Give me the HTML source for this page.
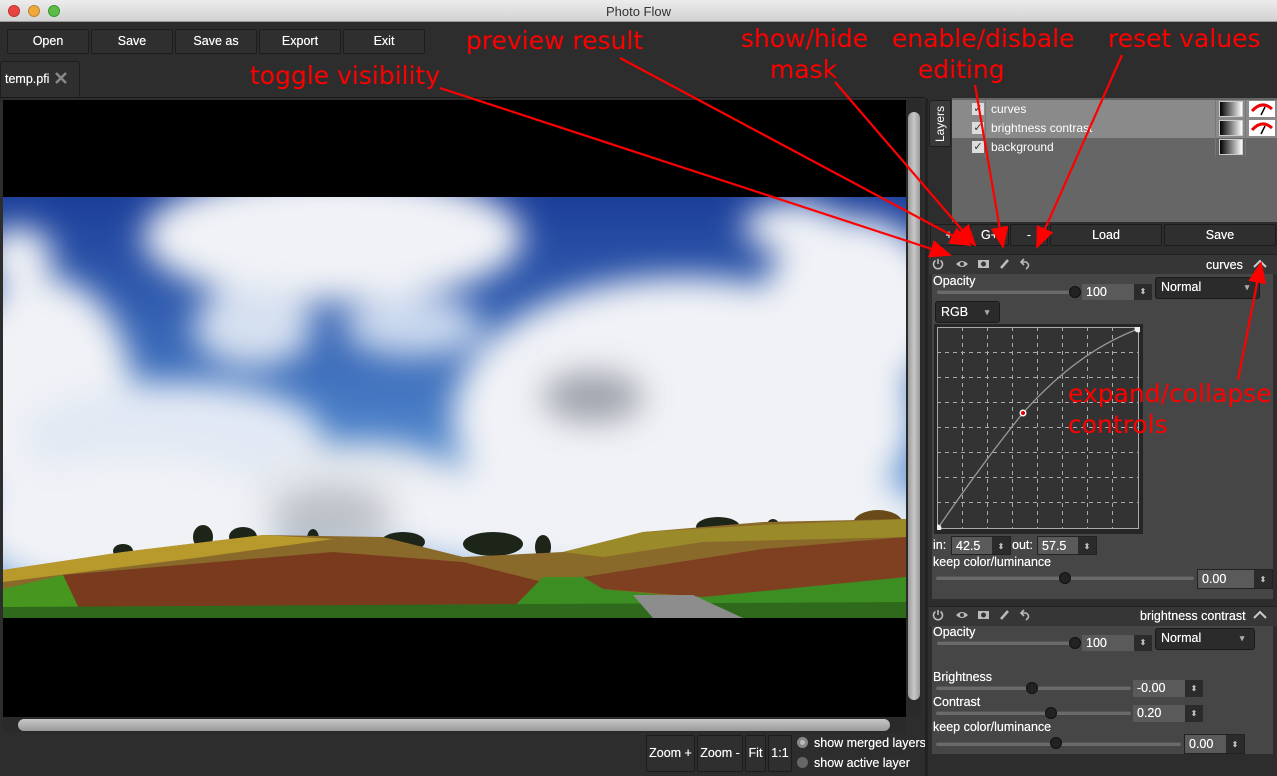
<!DOCTYPE html>
<html><head><meta charset="utf-8"><style>
*{margin:0;padding:0;box-sizing:border-box}
body{width:1277px;height:776px;overflow:hidden;background:#2d2d2d;font-family:"Liberation Sans",sans-serif;font-size:12px;color:#fff;position:relative}
.a{position:absolute}
.btn{position:absolute;background:#2f2f2f;border:1px solid #1c1c1c;border-radius:2px;color:#fff;font-size:12.5px;text-align:center;text-shadow:0 0 .4px #fff}
.bd{position:absolute;background:#2b2b2b;border:1px solid #1a1a1a;border-radius:3px;color:#fff;font-size:12.5px;text-shadow:0 0 .4px #fff}
.sp{position:absolute;background:#5a5a5a;color:#fff;font-size:12.5px;padding-left:4px;text-shadow:0 0 .4px #fff}
.sp i{position:absolute;right:0;top:0;bottom:0;width:18px;background:#2b2b2b;font-style:normal;color:#bbb;font-size:8px;text-align:center}
.tr{position:absolute;height:4px;background:#6a6a6a;border-radius:2px;border-top:1px solid #555}
.kn{position:absolute;width:12px;height:12px;border-radius:6px;background:#222;border:1px solid #111}
.lb{position:absolute;font-size:12.5px;color:#fff;text-shadow:0 0 .4px #fff;white-space:nowrap}
.red{position:absolute;color:#f00;font-family:"DejaVu Sans",sans-serif;font-size:25px;line-height:28px}
</style></head><body>
<div class="a" style="left:0;top:0;width:1277px;height:22px;background:linear-gradient(#ececec,#d2d2d2);border-bottom:1px solid #999"></div>
<div class="a" style="left:0;top:4px;width:1277px;text-align:center;color:#333;font-size:13px">Photo Flow</div>
<div class="a" style="left:8px;top:5px;width:12px;height:12px;border-radius:6px;background:#e9443f;border:1px solid #b33"></div>
<div class="a" style="left:28px;top:5px;width:12px;height:12px;border-radius:6px;background:#f0a83a;border:1px solid #b83"></div>
<div class="a" style="left:48px;top:5px;width:12px;height:12px;border-radius:6px;background:#5ebb45;border:1px solid #393"></div>
<div class="btn" style="left:7px;top:29px;width:82px;height:25px;line-height:23px">Open</div>
<div class="btn" style="left:91px;top:29px;width:82px;height:25px;line-height:23px">Save</div>
<div class="btn" style="left:175px;top:29px;width:82px;height:25px;line-height:23px">Save as</div>
<div class="btn" style="left:259px;top:29px;width:82px;height:25px;line-height:23px">Export</div>
<div class="btn" style="left:343px;top:29px;width:82px;height:25px;line-height:23px">Exit</div>
<div class="a" style="left:0;top:61px;width:80px;height:37px;background:#2f2f2f;border:1px solid #1e1e1e;border-bottom:none;border-radius:3px 3px 0 0"></div>
<div class="lb" style="left:5px;top:72px">temp.pfi</div>
<svg class="a" style="left:54px;top:71px" width="14" height="14" stroke="#888" stroke-width="2.5"><path d="M2 2L12 12M12 2L2 12"/></svg>
<div class="a" style="left:0;top:97px;width:925px;height:1px;background:#1a1a1a"></div>
<div class="a" style="left:3px;top:100px;width:903px;height:617px;background:#000"></div>
<svg class="a" style="left:3px;top:197px" width="903" height="421" viewBox="0 0 903 421">
<defs>
<filter id="b" filterUnits="userSpaceOnUse" x="-200" y="-200" width="1300" height="800"><feGaussianBlur stdDeviation="16"/></filter>
<linearGradient id="sky" x1="0" y1="0" x2="0" y2="1"><stop offset="0" stop-color="#1c3f9a"/><stop offset=".6" stop-color="#4f86cc"/><stop offset="1" stop-color="#8ab4e2"/></linearGradient>
</defs>
<rect width="903" height="421" fill="url(#sky)"/>
<g filter="url(#b)" fill="#f0f2f6">
<ellipse cx="330" cy="40" rx="190" ry="65"/>
<ellipse cx="40" cy="200" rx="90" ry="120"/>
<ellipse cx="15" cy="60" rx="35" ry="30"/>
<ellipse cx="170" cy="240" rx="150" ry="55" fill="#e2e9f4"/>
<ellipse cx="680" cy="220" rx="230" ry="140"/>
<ellipse cx="850" cy="110" rx="90" ry="90"/>
<ellipse cx="790" cy="30" rx="50" ry="25"/>
<ellipse cx="130" cy="330" rx="160" ry="70"/>
<ellipse cx="360" cy="300" rx="110" ry="55" fill="#e6e9ee"/>
<ellipse cx="640" cy="320" rx="290" ry="60"/>
<ellipse cx="410" cy="130" rx="70" ry="30" fill="#c9d8ee"/>
<ellipse cx="250" cy="130" rx="60" ry="40" fill="#d5e0f0"/>
</g>
<g filter="url(#b)">
<ellipse cx="590" cy="200" rx="50" ry="25" fill="#7a7f8a" opacity=".7"/>
<ellipse cx="330" cy="320" rx="60" ry="30" fill="#a0a5ae" opacity=".6"/>
</g>
<g fill="#1d2418">
<ellipse cx="200" cy="340" rx="10" ry="12"/><ellipse cx="240" cy="340" rx="14" ry="10"/><ellipse cx="310" cy="342" rx="6" ry="10"/>
<ellipse cx="400" cy="345" rx="22" ry="10"/><ellipse cx="490" cy="347" rx="30" ry="12"/><ellipse cx="540" cy="350" rx="8" ry="12"/>
<ellipse cx="715" cy="330" rx="22" ry="10"/><ellipse cx="770" cy="334" rx="8" ry="12"/><ellipse cx="875" cy="327" rx="25" ry="14" fill="#6b4a1a"/>
<ellipse cx="120" cy="354" rx="10" ry="7"/>
</g>
<path d="M0 373 L120 355 L260 338 L380 340 L460 360 L560 355 L640 335 L760 325 L903 322 L903 421 L0 421Z" fill="#8a6a2a"/>
<path d="M0 373 L120 355 L260 338 L330 342 L200 360 L0 385Z" fill="#b89a2c"/>
<path d="M560 355 L640 335 L760 328 L903 322 L903 340 L700 345 L600 360Z" fill="#9a8a2a"/>
<path d="M60 378 L330 355 L460 365 L540 385 L510 425 L80 420Z" fill="#7a3a1e"/>
<path d="M580 380 L760 352 L903 340 L903 380 L780 395 L700 400 L600 392Z" fill="#7e4020"/>
<path d="M540 380 L580 380 L600 392 L660 398 L700 400 L903 380 L903 421 L500 421Z" fill="#3c8e22"/>
<path d="M0 392 L60 378 L80 420 L0 421Z" fill="#47961f"/>
<path d="M0 410 L903 405 L903 421 L0 421Z" fill="#2f6a1c"/>
<path d="M630 398 L690 398 L740 421 L650 421Z" fill="#8c8c8c"/>
</svg>
<div class="a" style="left:906px;top:100px;width:16px;height:617px;background:#2a2a2a"></div>
<div class="a" style="left:908px;top:112px;width:12px;height:588px;background:linear-gradient(90deg,#9a9a9a,#c8c8c8,#9a9a9a);border-radius:6px"></div>
<div class="a" style="left:3px;top:717px;width:903px;height:16px;background:#2a2a2a"></div>
<div class="a" style="left:18px;top:719px;width:872px;height:12px;background:linear-gradient(#c8c8c8,#9a9a9a);border-radius:6px"></div>
<div class="btn" style="left:646px;top:735px;width:49px;height:37px;line-height:35px">Zoom +</div>
<div class="btn" style="left:697px;top:735px;width:46px;height:37px;line-height:35px">Zoom -</div>
<div class="btn" style="left:745px;top:735px;width:21px;height:37px;line-height:35px">Fit</div>
<div class="btn" style="left:768px;top:735px;width:24px;height:37px;line-height:35px">1:1</div>
<div class="a" style="left:797px;top:737px;width:11px;height:11px;border-radius:6px;background:#bbb;border:3px solid #888"></div>
<div class="a" style="left:797px;top:757px;width:11px;height:11px;border-radius:6px;background:#666"></div>
<div class="lb" style="left:814px;top:736px">show merged layers</div>
<div class="lb" style="left:814px;top:756px">show active layer</div>
<div class="a" style="left:925px;top:98px;width:3px;height:678px;background:#222"></div>
<div class="a" style="left:929px;top:100px;width:22px;height:47px;background:#3a3a3a;border:1px solid #1e1e1e;border-radius:3px 0 0 3px"></div>
<div class="a" style="left:933px;top:142px;transform:rotate(-90deg);transform-origin:0 0;font-size:12px;width:40px">Layers</div>
<div class="a" style="left:952px;top:98px;width:325px;height:124px;background:#666"></div>
<div class="a" style="left:952px;top:100px;width:325px;height:19px;background:#8a8a8a"></div>
<div class="a" style="left:952px;top:119px;width:325px;height:19px;background:#8a8a8a"></div>
<div class="a" style="left:985px;top:100px;width:1px;height:57px;background:#777"></div>
<div class="a" style="left:1215px;top:100px;width:1px;height:57px;background:#777"></div>
<div class="a" style="left:1245px;top:100px;width:1px;height:57px;background:#777"></div>
<div class="a" style="left:972px;top:103px;width:12px;height:12px;background:#ddd;color:#333;font-size:11px;line-height:12px;text-align:center">✓</div>
<div class="a" style="left:972px;top:122px;width:12px;height:12px;background:#ddd;color:#333;font-size:11px;line-height:12px;text-align:center">✓</div>
<div class="a" style="left:972px;top:141px;width:12px;height:12px;background:#ddd;color:#333;font-size:11px;line-height:12px;text-align:center">✓</div>
<div class="a" style="left:991px;top:102px;font-size:12px">curves</div>
<div class="a" style="left:991px;top:121px;font-size:12px">brightness contrast</div>
<div class="a" style="left:991px;top:140px;font-size:12px">background</div>
<div class="a" style="left:1219px;top:101px;width:24px;height:16px;background:linear-gradient(90deg,#000,#fff);border:1px solid #ccc"></div>
<div class="a" style="left:1219px;top:120px;width:24px;height:16px;background:linear-gradient(90deg,#000,#fff);border:1px solid #ccc"></div>
<div class="a" style="left:1219px;top:139px;width:24px;height:16px;background:linear-gradient(90deg,#000,#fff);border:1px solid #ccc"></div>
<svg class="a" style="left:1249px;top:101px" width="26" height="36"><rect width="26" height="16" fill="#fff"/><path d="M3 10 Q13 -1 23 8" stroke="#e00" stroke-width="3" fill="none"/><path d="M16 6 L12 14" stroke="#000" stroke-width="1.5"/><g transform="translate(0,19)"><rect width="26" height="16" fill="#fff"/><path d="M3 10 Q13 -1 23 8" stroke="#e00" stroke-width="3" fill="none"/><path d="M16 6 L12 14" stroke="#000" stroke-width="1.5"/></g></svg>
<div class="btn" style="left:930px;top:224px;width:38px;height:22px;line-height:20px">+</div>
<div class="btn" style="left:970px;top:224px;width:39px;height:22px;line-height:20px">G+</div>
<div class="btn" style="left:1010px;top:224px;width:38px;height:22px;line-height:20px">-</div>
<div class="btn" style="left:1050px;top:224px;width:112px;height:22px;line-height:20px">Load</div>
<div class="btn" style="left:1164px;top:224px;width:112px;height:22px;line-height:20px">Save</div>
<div class="a" style="left:929px;top:254px;width:348px;height:20px;background:#363636;border-top:1px solid #222"></div>
<div class="a" style="left:932px;top:274px;width:341px;height:325px;background:#464646"></div>
<svg class="a" style="left:932px;top:256px" width="110" height="16" fill="none" stroke="#bbb" stroke-width="1.6">
<path d="M6 3 V8 M3.5 4.5 A4.5 4.5 0 1 0 8.5 4.5"/>
<path d="M24 8 Q30 2 36 8 Q30 14 24 8Z" fill="#bbb" stroke="none"/><circle cx="30" cy="8" r="2" fill="#363636" stroke="none"/>
<rect x="46" y="4" width="11" height="8" fill="#bbb" stroke="none"/><circle cx="51.5" cy="8" r="2.5" fill="#363636" stroke="none"/>
<path d="M69 12 L76 4" stroke-width="2.5"/>
<path d="M94 13 Q99 9 94 6 H90 M92 3 L89 6 L92 9"/>
</svg>
<div class="lb" style="left:1206px;top:258px">curves</div>
<svg class="a" style="left:1252px;top:258px" width="16" height="12" fill="none" stroke="#ccc" stroke-width="2"><path d="M2 9 L8 3 L14 9"/></svg>
<div class="lb" style="left:933px;top:274px">Opacity</div>
<div class="tr" style="left:937px;top:290px;width:140px"></div>
<div class="kn" style="left:1069px;top:286px"></div>
<div class="sp" style="left:1082px;top:284px;width:70px;height:16px;line-height:16px">100<i>⬍</i></div>
<div class="bd" style="left:1155px;top:277px;width:105px;height:22px;padding:2px 0 0 5px">Normal<span style="position:absolute;right:8px;top:5px;font-size:8px;color:#aaa">▼</span></div>
<div class="bd" style="left:935px;top:301px;width:65px;height:22px;padding:3px 0 0 5px">RGB<span style="position:absolute;right:8px;top:6px;font-size:8px;color:#aaa">▼</span></div>
<div class="a" style="left:934px;top:324px;width:209px;height:210px;background:#262626"></div>
<svg class="a" style="left:937px;top:327px" width="203" height="203">
<rect x=".5" y=".5" width="201" height="201" fill="#333" stroke="#aaa"/>
<g stroke="#aaa" stroke-dasharray="4 4" stroke-width="1"><path d="M25.5 0V202M50.5 0V202M75.5 0V202M100.5 0V202M125.5 0V202M150.5 0V202M175.5 0V202M0 25.5H202M0 50.5H202M0 75.5H202M0 100.5H202M0 125.5H202M0 150.5H202M0 175.5H202"/></g>
<path d="M1 201 Q50 130 86 86 Q140 25 201 2" stroke="#999" stroke-width="1.3" fill="none"/>
<circle cx="86" cy="86" r="3.5" fill="#fff"/><circle cx="86" cy="86" r="2" fill="#d00"/>
<circle cx="201" cy="2" r="3.5" fill="#eee"/><circle cx="1" cy="201" r="3.5" fill="#eee"/>
</svg>
<div class="lb" style="left:933px;top:538px">in:</div>
<div class="sp" style="left:951px;top:536px;width:60px;height:19px;line-height:19px;border:1px solid #222">42.5<i>⬍</i></div>
<div class="lb" style="left:1012px;top:538px">out:</div>
<div class="sp" style="left:1037px;top:536px;width:60px;height:19px;line-height:19px;border:1px solid #222">57.5<i>⬍</i></div>
<div class="lb" style="left:933px;top:555px">keep color/luminance</div>
<div class="tr" style="left:936px;top:576px;width:258px"></div>
<div class="kn" style="left:1059px;top:572px"></div>
<div class="sp" style="left:1197px;top:569px;width:76px;height:20px;line-height:19px;border:1px solid #222">0.00<i>⬍</i></div>
<div class="a" style="left:929px;top:606px;width:348px;height:20px;background:#363636;border-top:1px solid #222"></div>
<div class="a" style="left:932px;top:626px;width:341px;height:128px;background:#464646"></div>
<svg class="a" style="left:932px;top:607px" width="110" height="16" fill="none" stroke="#bbb" stroke-width="1.6">
<path d="M6 3 V8 M3.5 4.5 A4.5 4.5 0 1 0 8.5 4.5"/>
<path d="M24 8 Q30 2 36 8 Q30 14 24 8Z" fill="#bbb" stroke="none"/><circle cx="30" cy="8" r="2" fill="#363636" stroke="none"/>
<rect x="46" y="4" width="11" height="8" fill="#bbb" stroke="none"/><circle cx="51.5" cy="8" r="2.5" fill="#363636" stroke="none"/>
<path d="M69 12 L76 4" stroke-width="2.5"/>
<path d="M94 13 Q99 9 94 6 H90 M92 3 L89 6 L92 9"/>
</svg>
<div class="lb" style="left:1140px;top:609px">brightness contrast</div>
<svg class="a" style="left:1252px;top:609px" width="16" height="12" fill="none" stroke="#ccc" stroke-width="2"><path d="M2 9 L8 3 L14 9"/></svg>
<div class="lb" style="left:933px;top:625px">Opacity</div>
<div class="tr" style="left:937px;top:641px;width:140px"></div>
<div class="kn" style="left:1069px;top:637px"></div>
<div class="sp" style="left:1082px;top:635px;width:70px;height:16px;line-height:16px">100<i>⬍</i></div>
<div class="bd" style="left:1155px;top:628px;width:100px;height:22px;padding:2px 0 0 5px">Normal<span style="position:absolute;right:8px;top:5px;font-size:8px;color:#aaa">▼</span></div>
<div class="lb" style="left:933px;top:670px">Brightness</div>
<div class="tr" style="left:936px;top:686px;width:195px"></div>
<div class="kn" style="left:1026px;top:682px"></div>
<div class="sp" style="left:1133px;top:680px;width:70px;height:17px;line-height:17px">-0.00<i>⬍</i></div>
<div class="lb" style="left:933px;top:695px">Contrast</div>
<div class="tr" style="left:936px;top:711px;width:195px"></div>
<div class="kn" style="left:1045px;top:707px"></div>
<div class="sp" style="left:1133px;top:705px;width:70px;height:17px;line-height:17px">0.20<i>⬍</i></div>
<div class="lb" style="left:933px;top:720px">keep color/luminance</div>
<div class="tr" style="left:936px;top:742px;width:245px"></div>
<div class="kn" style="left:1050px;top:737px"></div>
<div class="sp" style="left:1184px;top:734px;width:61px;height:20px;line-height:19px;border:1px solid #222">0.00<i>⬍</i></div>
<div class="red" style="left:250px;top:62px">toggle visibility</div>
<div class="red" style="left:466px;top:27px">preview result</div>
<div class="red" style="left:741px;top:25px">show/hide</div>
<div class="red" style="left:770px;top:56px">mask</div>
<div class="red" style="left:892px;top:25px">enable/disbale</div>
<div class="red" style="left:918px;top:56px">editing</div>
<div class="red" style="left:1108px;top:25px">reset values</div>
<div class="red" style="left:1068px;top:380px">expand/collapse</div>
<div class="red" style="left:1068px;top:411px">controls</div>
<svg class="a" style="left:0;top:0" width="1277" height="776" fill="none" stroke="#f00" stroke-width="2.2">
<defs><marker id="h" markerWidth="22" markerHeight="18" refX="20" refY="9" orient="auto" markerUnits="userSpaceOnUse"><path d="M0 0 L22 9 L0 18Z" fill="#f00" stroke="none"/></marker></defs>
<path d="M440 88 L950 255" marker-end="url(#h)"/>
<path d="M620 58 L970 245" marker-end="url(#h)"/>
<path d="M835 82 L975 245" marker-end="url(#h)"/>
<path d="M975 85 L1003 247" marker-end="url(#h)"/>
<path d="M1122 55 L1037 247" marker-end="url(#h)"/>
<path d="M1238 380 L1261 263" marker-end="url(#h)"/>
</svg>
</body></html>
